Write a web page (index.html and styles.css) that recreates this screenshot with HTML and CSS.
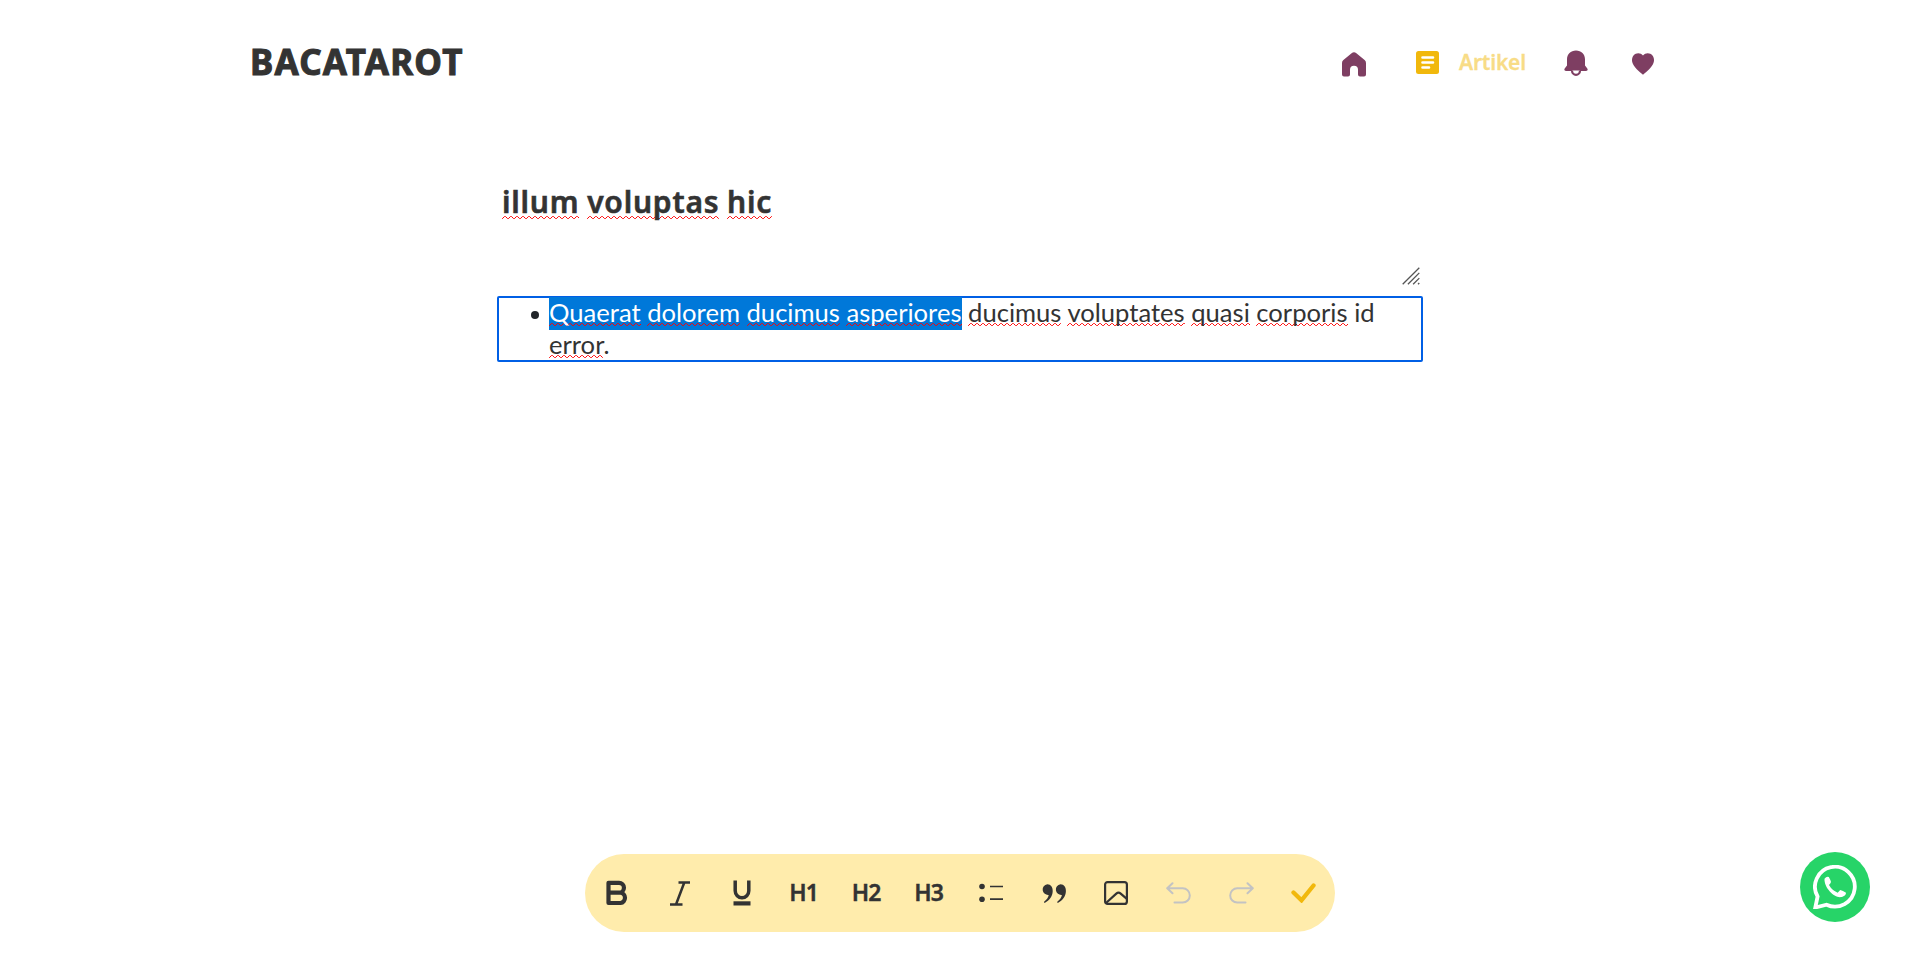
FILE: index.html
```html
<!DOCTYPE html>
<html lang="id">
<head>
<meta charset="utf-8">
<title>Bacatarot</title>
<link rel="stylesheet" href="styles.css">
</head>
<body>
<div class="page">
  <header class="header">
    <a class="logo">BACATAROT</a>
    <nav class="nav">
      <svg class="nav-home" width="24" height="25" viewBox="0 0 24 25"><path d="M9.6 1.2Q12-.8 14.4 1.2L22.6 8Q24 9.2 24 11v11.400Q24 24.500 22 24.500h-4Q16 24.500 16 22.500v-4.700a4 4 0 0 0-8 0v4.700q0 2-2 2H2q-2 0-2-2V11Q0 9.200 1.400 8z"/></svg>
      <a class="nav-article">
        <svg width="23" height="23" viewBox="0 0 23 23"><rect width="23" height="23" rx="2.500" fill="#f1b80c"/><path d="M6.500 6.500h10.500M6.500 11.500h10.500M6.500 16.500h6.500" stroke="#fff" stroke-width="2.600" stroke-linecap="round"/></svg>
        <span>Artikel</span>
      </a>
      <svg class="nav-bell" width="24" height="27" viewBox="0 0 24 27"><path d="M12 .5c5.300 0 9 3.800 9 8.700v6.300l2.300 3q1.200 2.500-1.300 2.500H2Q-.5 21 .7 18.500l2.300-3V9.200C3 4.300 6.700.5 12 .5z"/><path d="M8 20.500a4 4.300 0 0 0 8 0" fill="#fff" stroke="#7e3e62" stroke-width="2.200"/></svg>
      <svg class="nav-heart" width="22" height="22" viewBox="0 0 22 22"><path d="M11 2.600C13 0 16-.3 18.300.8 21.500 2.300 22.600 6 21.700 9.300 20.500 14 14.500 19 11 21.800 7.500 19 1.500 14 .3 9.300-.6 6 .5 2.300 3.700.8 6-.3 9 0 11 2.600z"/></svg>
    </nav>
  </header>
  <main class="editor">
    <div class="title-field">
      <h1 class="title"><span class="typo">illum</span> <span class="typo">voluptas</span> <span class="typo">hic</span></h1>
      <svg class="grip" width="18" height="18" viewBox="0 0 18 18"><path d="M.7 17.300L17.300.7M5.900 17.300L17.300 5.900M11.100 17.300l6.200-6.200M16 17.300l1.300-1.300"/></svg>
    </div>
    <div class="content">
      <ul class="list">
        <li><span class="selected"><span class="typo">Quaerat</span> <span class="typo">dolorem</span> <span class="typo">ducimus</span> <span class="typo">asperiores</span></span> <span class="typo">ducimus</span> <span class="typo">voluptates</span> <span class="typo">quasi</span> <span class="typo">corporis</span> id <span class="typo">error</span>.</li>
      </ul>
    </div>
  </main>
  <footer class="toolbar">
    <button class="nudge"><svg width="22" height="26" viewBox="0 0 22 26"><path d="M2.500 2.800H13a4.900 4.900 0 0 1 0 9.900H2.500zM2.500 12.700H14.500a5.200 5.200 0 0 1 0 10.300H2.500z" fill="none" stroke="#333" stroke-width="4.200" stroke-linejoin="round"/></svg></button>
    <button class="nudge"><svg width="20" height="25" viewBox="0 0 20 25"><path d="M8.500 1.500H20M0 23.500h12.500M14.300 1.500L6 23.500" fill="none" stroke="#333" stroke-width="2.500"/></svg></button>
    <button class="nudge"><svg width="18" height="26" viewBox="0 0 18 26"><path d="M2.200.5v10.300a6.800 7 0 0 0 13.600 0V.5" fill="none" stroke="#333" stroke-width="3.500"/><path d="M.5 21.300h17V25.500H.5z" fill="#333"/></svg></button>
    <button class="heading">H1</button>
    <button class="heading">H2</button>
    <button class="heading">H3</button>
    <button><svg width="24" height="20" viewBox="0 0 24 20"><circle cx="3" cy="3.500" r="2.800" fill="#333"/><circle cx="3" cy="16.200" r="2.800" fill="#333"/><path d="M11 3.500h13M11 16.200h13" stroke="#333" stroke-width="1.700"/></svg></button>
    <button><svg width="24" height="19" viewBox="0 0 24 19"><g fill="#333"><path id="quote" d="M5.300.3C9 .3 10.700 3.300 10.700 7c0 5.300-3.500 9.500-7.700 11.700-.9.300-1.400-.7-.7-1.300 2.500-1.900 4-4 4.400-6.500A5.300 5.300 0 1 1 5.300.3z"/><use href="#quote" x="13.200"/></g></svg></button>
    <button><svg width="24" height="24" viewBox="0 0 24 24"><rect x="1.100" y="1.100" width="21.800" height="21.800" rx="2.500" fill="none" stroke="#333" stroke-width="2.200"/><path d="M2 22L12.300 12.600q2.200-1.900 4.400 0L22.500 17.600" fill="none" stroke="#333" stroke-width="2.200"/></svg></button>
    <button><svg class="history" width="25" height="22" viewBox="0 0 25 22"><path d="M6.500 1.200L1.200 6.300l5.300 5M1.500 6.300h15.200a7.100 7.100 0 0 1 0 14.200H8.500"/></svg></button>
    <button><svg class="history" width="25" height="22" viewBox="0 0 25 22"><path d="M18.500 1.200l5.300 5.100-5.300 5M23.500 6.300H8.300a7.100 7.100 0 0 0 0 14.200h8.200"/></svg></button>
    <button><svg width="25" height="20" viewBox="0 0 25 20"><path d="M2.500 9.500l8 7.800L22.500 2.500" fill="none" stroke="#f1b80c" stroke-width="4.300" stroke-linecap="round"/></svg></button>
  </footer>
  <a class="whatsapp">
    <svg width="44" height="44" viewBox="0 0 44 44"><path d="M4.600 31.500A19.900 19.900 0 1 1 13.500 39.700L2.300 42.500z" fill="none" stroke="#fff" stroke-width="3.800"/><path d="M11.500 13.700q2-2.500 4.300-1.700 1.600 2.600 2.200 5.100-.5 1.600-2 3 3 5.400 8.700 7.700l2.500-2.700q2.700.4 5.800 2.700c0 3-3.500 4.400-6 4.400C20.500 32 11 22.500 11.500 13.700z" fill="#fff"/></svg>
  </a>
</div>
</body>
</html>
```
FILE: styles.css
```css
* { box-sizing: border-box; }
body { margin: 0; background: #fff; color: #333; font-family: "Noto Sans", sans-serif; }
.page { display: flex; flex-direction: column; width: 1920px; height: 972px; overflow: hidden; }
.header { display: flex; justify-content: space-between; padding: 0 266px 0 250px; height: 181px; }
.logo { margin-top: 38px; font-size: 35px; line-height: 48px; font-weight: 700; letter-spacing: 1.200px; -webkit-text-stroke: 1px #333; }
.nav { display: flex; align-items: flex-start; fill: #7e3e62; }
.nav-home { margin: 52px 50px 0 0; }
.nav-article { display: flex; gap: 20px; width: 148px; margin-top: 51px; color: #f8dc86; font-size: 21px; line-height: 23px; font-weight: 600; letter-spacing: -.2px; -webkit-text-stroke: .3px #f8dc86; }
.nav-bell { margin-top: 50px; }
.nav-heart { margin: 53px 0 0 44px; }
.editor { width: 926px; margin: 0 auto; flex: 1; }
.title-field { display: flex; justify-content: space-between; align-items: flex-end; height: 104px; padding: 0 3px 0 5px; }
.title { align-self: flex-start; margin: 0; font-size: 30px; line-height: 42px; font-weight: 600; letter-spacing: .8px; word-spacing: -.9px; -webkit-text-stroke: .6px #333; }
.title .typo { background-position: left bottom 3px; }
.grip { fill: none; stroke: #555; stroke-width: 1.300; }
.content { margin-top: 11px; height: 66px; border: 2px solid #005fe5; border-radius: 2px; }
.list { margin: -2px 0 0; padding: 0 0 0 50px; list-style: none; }
.list li { position: relative; font-family: Lato, sans-serif; font-size: 25.600px; line-height: 32px; }
.list li::before { content: ""; position: absolute; left: -18px; top: 15px; width: 8px; height: 8px; border-radius: 50%; background: #212529; }
.selected { padding: 0 0 3px; background: #0078d9; color: #fff; }
.typo { background: url("data:image/svg+xml,%3Csvg xmlns='http://www.w3.org/2000/svg' width='6' height='3'%3E%3Cpath d='M-1.500 1L0 2.500h.5L2.500.5h1L5.500 2.500H6' fill='none' stroke='red'/%3E%3C/svg%3E") repeat-x left bottom 1px; }
.toolbar { display: grid; grid-template-columns: repeat(12, 62.500px); width: 750px; height: 78px; margin: 0 auto 40px; background: #ffecac; border-radius: 39px; }
.toolbar button { display: flex; align-items: center; justify-content: center; padding: 0; border: 0; background: none; color: #333; }
.toolbar .nudge { padding-left: 2px; }
.toolbar .heading { font: 600 23px "Noto Sans", sans-serif; letter-spacing: -.7px; padding-bottom: 2px; -webkit-text-stroke: .4px #333; }
.history { fill: none; stroke: #c3c3c3; stroke-width: 2; stroke-linecap: round; stroke-linejoin: round; }
.whatsapp { position: absolute; left: 1800px; top: 852px; display: flex; align-items: center; justify-content: center; width: 70px; height: 70px; border-radius: 50%; background: #27d468; }
```
